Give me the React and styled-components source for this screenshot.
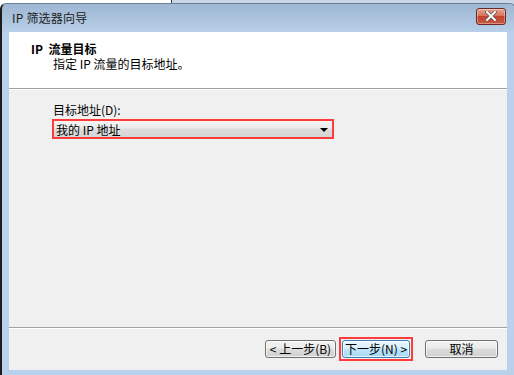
import React from 'react';
import styled, { createGlobalStyle } from 'styled-components';

const GlobalStyle = createGlobalStyle`
    html, body {
        margin: 0;
        padding: 0;
        background: #ffffff;
        overflow: hidden;
    }
    body {
        font-family: "Noto Sans CJK SC", "DejaVu Sans", sans-serif;
        font-size: 12px;
        color: #000;
    }
`;

const Desktop = styled.div`
    width: 514px;
    height: 375px;
    padding-top: 3px;
    box-sizing: border-box;
    background:
        linear-gradient(to right, #ffffff 0, #ffffff 171px, #3a3a3a 171px, #3a3a3a 172px, #c8d6e7 172px);
    background-size: 100% 4px;
    background-repeat: no-repeat;
    overflow: hidden;
`;

const Window = styled.div`
    width: 516px;
    height: 374px;
    box-sizing: border-box;
    border-left: 2px solid #1c1c1c;
    border-top: 1px solid #6d7f95;
    border-right: 1px solid #6d7f95;
    border-radius: 6px 6px 0 0;
    background: linear-gradient(to bottom, #9fb8d3 0, #aac2dc 14px, #b9d1ea 30px, #b9d1ea 100%);
    display: flex;
    flex-direction: column;
    padding: 0 8px 7px 7px;
`;

const TitleBar = styled.div`
    height: 28px;
    display: flex;
    align-items: center;
    justify-content: space-between;
    padding-left: 3px;
    padding-right: 1px;
`;

const Title = styled.span`
    font-size: 12px;
    color: #1e1e1e;
    margin-top: -2px;
    letter-spacing: 0.2px;
`;

const CloseButton = styled.div`
    width: 28px;
    height: 15px;
    margin-top: -4px;
    border: 1px solid #6b2a24;
    border-radius: 3px;
    background: linear-gradient(to bottom, #e8a493 0, #d7725c 45%, #c4432b 50%, #c9583f 100%);
    box-shadow: inset 0 0 0 1px rgba(255, 255, 255, 0.35);
    display: flex;
    align-items: center;
    justify-content: center;
`;

const Client = styled.div`
    flex: 1;
    display: flex;
    flex-direction: column;
    background: #f0f0f0;
`;

const Header = styled.div`
    height: 57px;
    background: #ffffff;
    border-bottom: 1px solid #a0a0a0;
    box-shadow: 0 1px 0 #ffffff;
    padding: 9px 0 0 22px;
    box-sizing: border-box;
`;

const HeaderTitle = styled.div`
    font-weight: bold;
    line-height: 15px;
`;

const HeaderSub = styled.div`
    padding-left: 22px;
    line-height: 15px;
`;

const Body = styled.div`
    flex: 1;
    padding: 13px 0 0 43px;
    display: flex;
    flex-direction: column;
    gap: 2px;
`;

const Label = styled.div`
    line-height: 15px;
    padding-left: 1px;
`;

const Highlight = styled.div`
    width: ${p => p.w}px;
    box-sizing: border-box;
    border: 2px solid #ff3b3b;
    padding: ${p => p.pad || 0}px;
`;

const Select = styled.div`
    height: 16px;
    background: linear-gradient(to bottom, #f4f4f4 0, #ebebeb 45%, #dddddd 50%, #d4d4d4 100%);
    display: flex;
    align-items: center;
    justify-content: space-between;
    padding: 0 4px 0 2px;
`;

const Arrow = styled.span`
    width: 0;
    height: 0;
    border-left: 4px solid transparent;
    border-right: 4px solid transparent;
    border-top: 4px solid #000;
    margin-top: 1px;
`;

const Footer = styled.div`
    height: 42px;
    border-top: 1px solid #a0a0a0;
    box-shadow: inset 0 1px 0 #ffffff;
    display: flex;
    align-items: center;
    justify-content: flex-end;
    padding-right: 9px;
    gap: 3px;
`;

const Button = styled.div`
    width: ${p => p.w}px;
    height: 18px;
    box-sizing: border-box;
    border: 1px solid ${p => (p.primary ? '#3c7fb1' : '#707070')};
    border-radius: 3px;
    background: ${p => (p.primary
        ? 'linear-gradient(to bottom, #eaf6fd 0, #d9f0fc 45%, #bee6fd 50%, #a7d9f5 100%)'
        : 'linear-gradient(to bottom, #f2f2f2 0, #ebebeb 45%, #dddddd 50%, #cfcfcf 100%)')};
    box-shadow: inset 0 0 0 1px rgba(255, 255, 255, 0.7);
    display: flex;
    align-items: center;
    justify-content: center;
    white-space: pre;
    line-height: 14px;
    margin-left: ${p => p.ml || 0}px;
`;

function App() {
    return (
        <Desktop>
            <GlobalStyle />
            <Window>
                <TitleBar>
                    <Title>IP 筛选器向导</Title>
                    <CloseButton>
                        <svg width="12" height="10" viewBox="0 0 12 10">
                            <path d="M2 1 L10 9 M10 1 L2 9" stroke="#555" strokeWidth="3.4" strokeLinecap="square" />
                            <path d="M2 1 L10 9 M10 1 L2 9" stroke="#fff" strokeWidth="2" strokeLinecap="square" />
                        </svg>
                    </CloseButton>
                </TitleBar>
                <Client>
                    <Header>
                        <HeaderTitle>IP&nbsp; 流量目标</HeaderTitle>
                        <HeaderSub>指定 IP 流量的目标地址。</HeaderSub>
                    </Header>
                    <Body>
                        <Label>目标地址(D):</Label>
                        <Highlight w={282}>
                            <Select>
                                <span>我的 IP 地址</span>
                                <Arrow />
                            </Select>
                        </Highlight>
                    </Body>
                    <Footer>
                        <Button w={71}>{'< 上一步(B)'}</Button>
                        <Highlight w={74} pad={1}>
                            <Button w={68} primary>{'下一步(N) >'}</Button>
                        </Highlight>
                        <Button w={73} ml={9}>取消</Button>
                    </Footer>
                </Client>
            </Window>
        </Desktop>
    );
}

export default App;
